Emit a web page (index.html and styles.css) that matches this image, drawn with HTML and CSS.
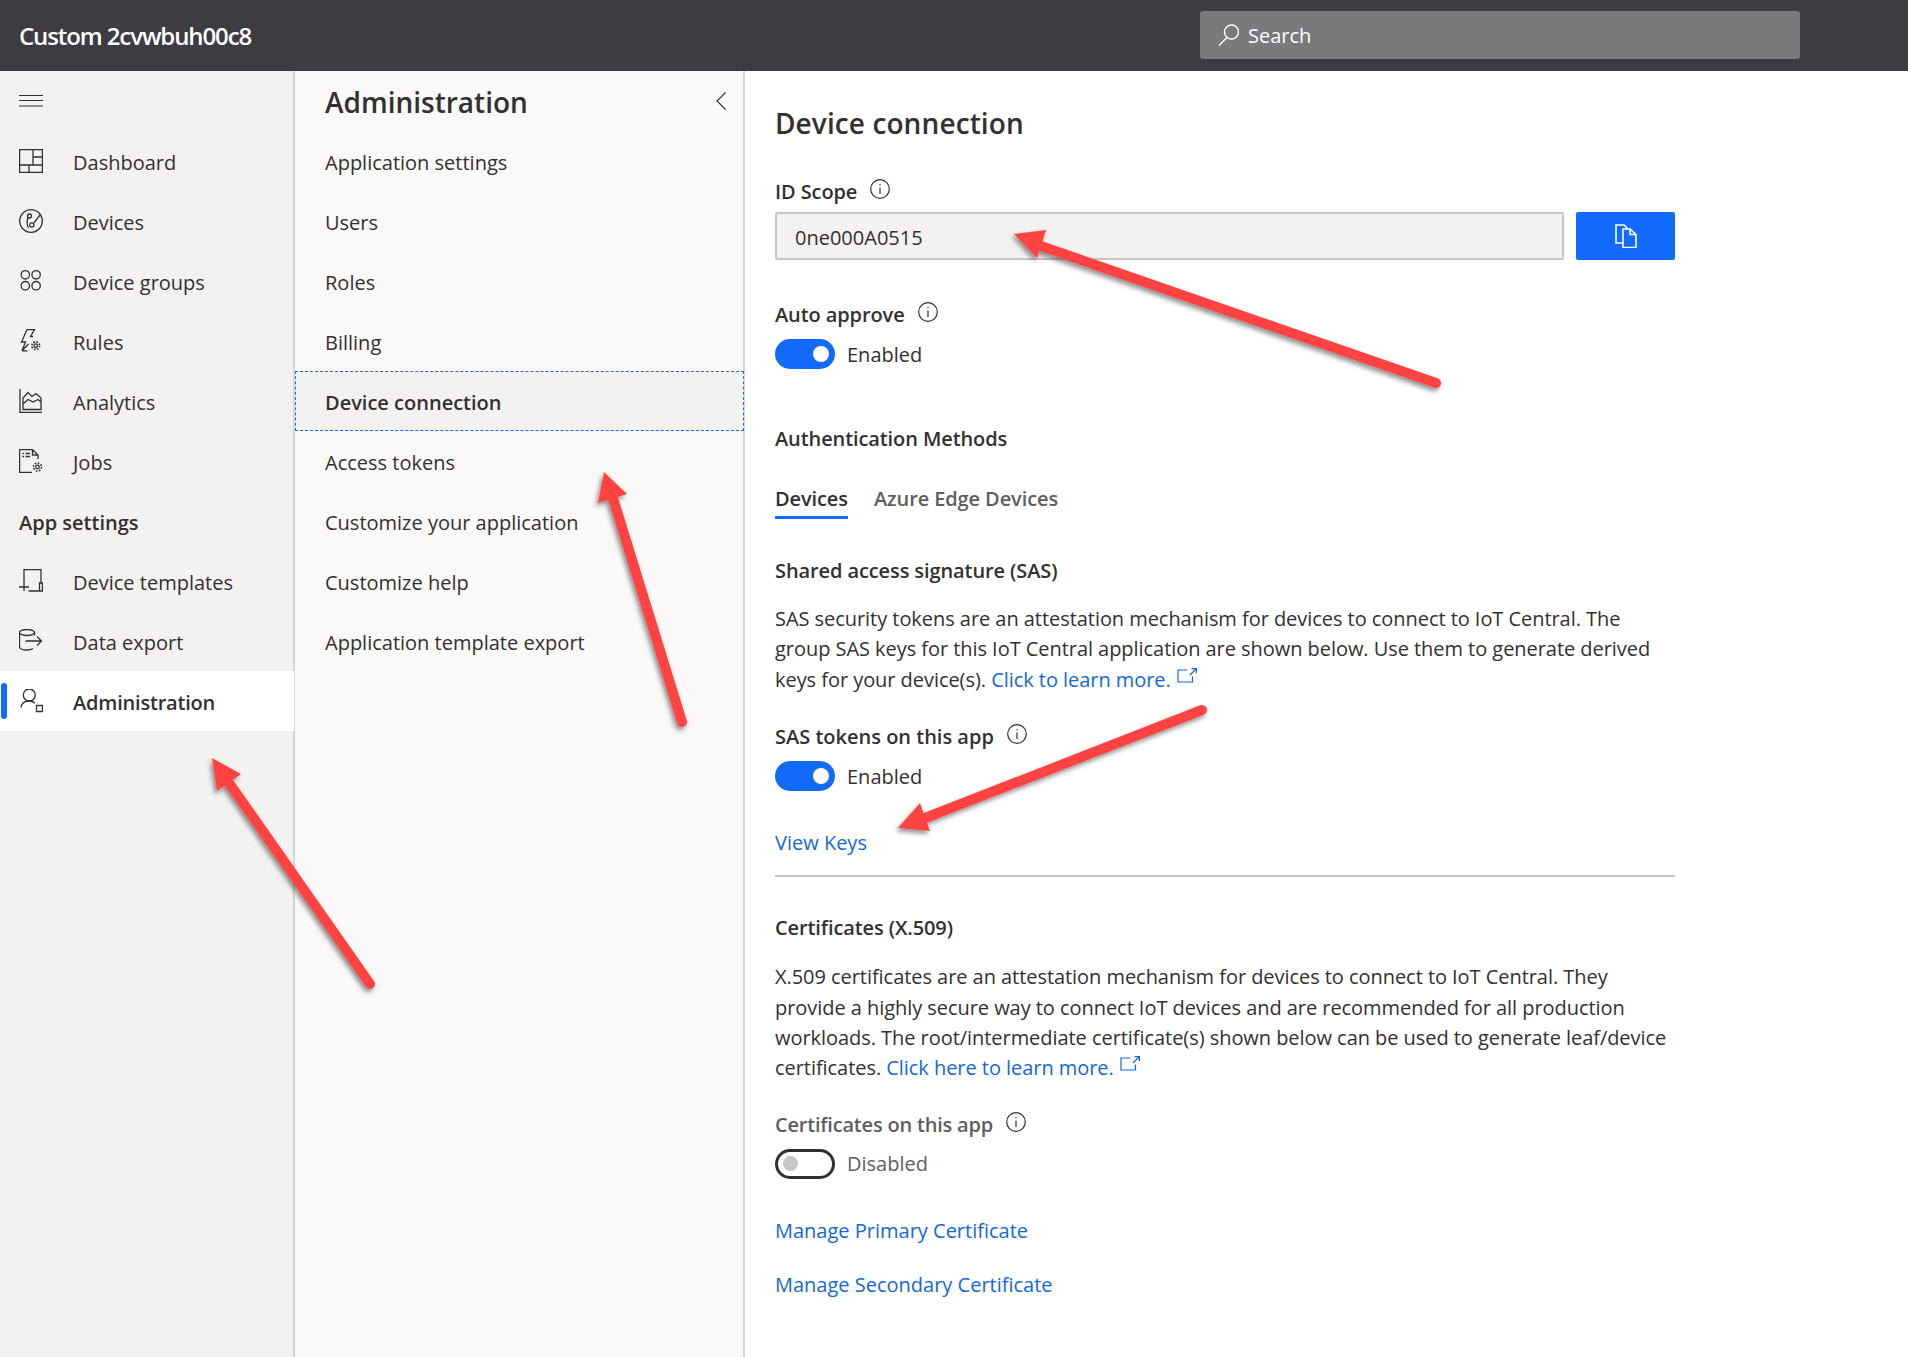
FILE: index.html
```html
<!DOCTYPE html>
<html lang="en">
<head>
<meta charset="utf-8">
<title>Device connection</title>
<link rel="stylesheet" href="styles.css">
</head>
<body>
<div class="page">
  <header class="topbar">
    <div class="brand">Custom 2cvwbuh00c8</div>
    <div class="search">
      <svg class="search-icon" viewBox="0 0 22 22"><circle cx="13.5" cy="8" r="7"/><path d="M9 13.5 1 21.5"/></svg>
      <span>Search</span>
    </div>
  </header>
  <div class="body">
    <nav class="sidebar">
      <div class="burger"><svg class="ico thin" viewBox="0 0 24 24"><path d="M0 .5H24M0 5.5H24M0 11H24" transform="translate(0 6)"/></svg></div>
      <a class="side-row"><svg class="ico" viewBox="0 0 24 24"><path d="M.6.6H23.4V23.4H.6ZM.6 16H23.4M14 .6V16M14 8H23.4M10 16V23.4"/></svg><span>Dashboard</span></a>
      <a class="side-row"><svg class="ico" viewBox="0 0 24 24"><circle cx="12" cy="12" r="11.3"/><circle cx="10.5" cy="7" r="2"/><circle cx="12.8" cy="16" r="2.1"/><path d="M14.4 14.6 21 6M9.2 8.6C7.5 12 8 16 9.5 19"/></svg><span>Devices</span></a>
      <a class="side-row"><svg class="ico" viewBox="0 0 24 24"><circle cx="6.300" cy="5.800" r="4.200"/><circle cx="17.100" cy="5.800" r="4.200"/><circle cx="6.300" cy="16.700" r="4.200"/><circle cx="17.100" cy="16.700" r="4.200"/></svg><span>Device groups</span></a>
      <a class="side-row"><svg class="ico" viewBox="0 0 24 24"><path d="M8 .6H15.500L11.500 7.500H14M3 21.800 6.500 13H2.500L8 .6M3 21.800 9.500 15M3 21.800H8.500"/><circle cx="16.700" cy="16.700" r="1.800"/><circle cx="16.700" cy="16.700" r="3.900" stroke-dasharray="1.600 1.500" stroke-width="1.600"/></svg><span>Rules</span></a>
      <a class="side-row"><svg class="ico" viewBox="0 0 24 24"><path d="M1 0V23.4H23M4 20.500H22V9L17 4.500 13 7.500 9 3.500 4 9ZM4 15 9 10.500 14 13 19 10.500 22 13"/></svg><span>Analytics</span></a>
      <a class="side-row"><svg class="ico" viewBox="0 0 24 24"><path d="M13 23.4H.6V.6H13.5L19 6V10M13.5.6V6H19M3.5 4.5H5M6.5 4.5H11M3.5 7.5H5M6.5 7.5H11"/><circle cx="18.5" cy="18" r="1.800"/><circle cx="18.5" cy="18" r="4" stroke-dasharray="1.600 1.500" stroke-width="1.600"/></svg><span>Jobs</span></a>
      <div class="side-heading">App settings</div>
      <a class="side-row"><svg class="ico" viewBox="0 0 24 24"><path d="M5 22V.6H22V13.500M0 18H10M9.500 22H23.400V14H20.500V22"/></svg><span>Device templates</span></a>
      <a class="side-row"><svg class="ico" viewBox="0 0 24 24"><ellipse cx="8" cy="3.500" rx="7.500" ry="3"/><path d="M.5 3.500V17.500C.5 19.800 4 21 8 21 10.500 21 12.500 20.500 14 19.500M15.500 3.500V6.500M6.500 12H22.500M18 7.500 22.500 12 18 16.500"/></svg><span>Data export</span></a>
      <a class="side-row active"><svg class="ico" viewBox="0 0 24 24"><circle cx="10.300" cy="6" r="6"/><path d="M1.800 18.500C2.500 15 5.500 12 10.300 12 12.500 12 14.500 12.800 15.800 14.200M17.500 16.500H23.500V22.500H17.500Z"/></svg><span>Administration</span></a>
    </nav>
    <aside class="subnav">
      <div class="subnav-head">
        <h2>Administration</h2>
        <svg class="chevron" viewBox="0 0 10 18"><path d="M9.500.5 1 9l8.500 8.500"/></svg>
      </div>
      <a class="sub-row">Application settings</a>
      <a class="sub-row">Users</a>
      <a class="sub-row">Roles</a>
      <a class="sub-row">Billing</a>
      <a class="sub-row selected">Device connection</a>
      <a class="sub-row">Access tokens</a>
      <a class="sub-row">Customize your application</a>
      <a class="sub-row">Customize help</a>
      <a class="sub-row">Application template export</a>
    </aside>
    <main class="main">
      <h1>Device connection</h1>
      <div class="label label-id">ID Scope<svg class="info" viewBox="0 0 20 20"><circle cx="10" cy="10" r="9.300"/><path d="M10 8.500V15M10 5V6.300"/></svg></div>
      <div class="id-row">
        <div class="id-input">0ne000A0515</div>
        <button class="copy" type="button"><svg viewBox="0 0 22 24"><path d="M8 19H1V1H9L12 4V5M8 5H15L21 10.500V23.500H8ZM15 5V10.500H21" /></svg></button>
      </div>
      <div class="label label-auto">Auto approve<svg class="info" viewBox="0 0 20 20"><circle cx="10" cy="10" r="9.300"/><path d="M10 8.500V15M10 5V6.300"/></svg></div>
      <div class="toggle-row"><span class="toggle on"></span><span>Enabled</span></div>
      <div class="label label-auth">Authentication Methods</div>
      <div class="tabs"><span class="tab current">Devices</span><span class="tab">Azure Edge Devices</span></div>
      <div class="label label-sas">Shared access signature (SAS)</div>
      <p class="para para-sas">SAS security tokens are an attestation mechanism for devices to connect to IoT Central. The<br>group SAS keys for this IoT Central application are shown below. Use them to generate derived<br>keys for your device(s). <a class="link">Click to learn more.</a><svg class="ext" viewBox="0 0 20 15"><path d="M10 2H1V14H15.500V8.500M13 7 19 1M14.500.6H19.400V5"/></svg></p>
      <div class="label label-tok strong">SAS tokens on this app<svg class="info" viewBox="0 0 20 20"><circle cx="10" cy="10" r="9.300"/><path d="M10 8.500V15M10 5V6.300"/></svg></div>
      <div class="toggle-row"><span class="toggle on"></span><span>Enabled</span></div>
      <a class="link block view-keys">View Keys</a>
      <div class="divider"></div>
      <div class="label label-cert">Certificates (X.509)</div>
      <p class="para para-cert">X.509 certificates are an attestation mechanism for devices to connect to IoT Central. They<br>provide a highly secure way to connect IoT devices and are recommended for all production<br>workloads. The root/intermediate certificate(s) shown below can be used to generate leaf/device<br>certificates. <a class="link">Click here to learn more.</a><svg class="ext" viewBox="0 0 20 15"><path d="M10 2H1V14H15.500V8.500M13 7 19 1M14.500.6H19.400V5"/></svg></p>
      <div class="label label-tok-off muted">Certificates on this app<svg class="info" viewBox="0 0 20 20"><circle cx="10" cy="10" r="9.300"/><path d="M10 8.500V15M10 5V6.300"/></svg></div>
      <div class="toggle-row muted"><span class="toggle off"></span><span>Disabled</span></div>
      <a class="link block manage-1">Manage Primary Certificate</a>
      <a class="link block manage-2">Manage Secondary Certificate</a>
    </main>
  </div>
  <svg class="arrows" viewBox="0 0 1908 1357" aria-hidden="true">
    <defs>
      <filter id="shadow" x="-10%" y="-10%" width="120%" height="120%">
        <feDropShadow dx="-2" dy="3" stdDeviation="2.500" flood-color="#000" flood-opacity=".45"/>
      </filter>
    </defs>
    <g filter="url(#shadow)">
      <path class="shaft" d="M1436 383 1035 244"/>
      <polygon class="head" points="1014,234 1046,230 1037,258"/>
    </g>
    <g filter="url(#shadow)">
      <path class="shaft" d="M682 722 612 495"/>
      <polygon class="head" points="604,472 627,494 598,503"/>
    </g>
    <g filter="url(#shadow)">
      <path class="shaft" d="M370 984 227 780"/>
      <polygon class="head" points="212,758 241,774 217,791"/>
    </g>
    <g filter="url(#shadow)">
      <path class="shaft" d="M1202 710 920 820"/>
      <polygon class="head" points="898,828 920,803 930,831"/>
    </g>
  </svg>
</div>
</body>
</html>
```

FILE: styles.css
```css
* { box-sizing: border-box; }
html, body { margin: 0; padding: 0; }
body {
  font-family: "Open Sans", "Noto Sans", sans-serif;
  font-size: 20px;
  color: #323130;
  background: #fff;
}
.page { position: relative; width: 1908px; height: 1357px; overflow: hidden; display: flex; flex-direction: column; }

.topbar { height: 71px; flex: none; background: #3d3c42; color: #fff; display: flex; align-items: center; padding: 0 19px; }
.brand { font-size: 24px; font-weight: 600; letter-spacing: -1.1px; flex: none; width: 1181px; }
.search { width: 600px; height: 48px; margin-top: -1px; background: #7a7a7c; border-radius: 3px; display: flex; align-items: center; padding-left: 18px; gap: 8px; }
.search-icon { width: 22px; height: 22px; fill: none; stroke: #fff; stroke-width: 1.4; }

.body { flex: 1; display: flex; min-height: 0; }

.sidebar { width: 295px; flex: none; background: #f3f2f1; border-right: 2px solid #d8d6d4; }
.ico { width: 24px; height: 24px; flex: none; fill: none; stroke: #323130; stroke-width: 1.3; }
.ico.thin { stroke-width: 1; }
.burger { height: 60px; padding-left: 19px; display: flex; align-items: center; }
.side-row { height: 60px; padding-left: 19px; display: flex; align-items: center; gap: 30px; position: relative; }
.side-row span { padding-top: 2px; }
.side-heading { height: 60px; padding: 2px 0 0 19px; display: flex; align-items: center; font-weight: 600; }
.side-row.active { background: #fff; font-weight: 600; letter-spacing: -0.2px; margin-right: -1px; }
.side-row.active::before { content: ""; position: absolute; left: 1px; top: 12px; width: 6px; height: 36px; border-radius: 3px; background: #136bfb; }

.subnav { width: 450px; flex: none; background: #faf9f8; border-right: 2px solid #d8d6d4; }
.subnav-head { height: 60px; padding: 2px 17px 0 30px; display: flex; align-items: center; justify-content: space-between; }
.subnav-head h2 { margin: 0; font-size: 28px; font-weight: 600; }
.chevron { width: 10px; height: 18px; margin-top: -2px; fill: none; stroke: #323130; stroke-width: 1.1; }
.sub-row { display: flex; align-items: center; height: 60px; padding: 2px 0 0 30px; }
.sub-row.selected { background: #f3f2f1; outline: 1px dashed #136bfb; outline-offset: -1px; font-weight: 600; margin-right: -1px; }

.main { flex: 1; padding: 33px 0 0 30px; }
.main h1 { margin: 0; font-size: 28px; line-height: 38px; font-weight: 600; letter-spacing: 0.1px; }
.label { display: flex; line-height: 30px; font-weight: 600; letter-spacing: -0.1px; }
.label.strong { letter-spacing: 0; }
.info { width: 20px; height: 20px; margin: 2px 0 0 13px; fill: none; stroke: #323130; stroke-width: 1.2; }
.label-id { margin-top: 35px; }
.label-auto { margin-top: 40px; }
.label-auth { margin-top: 55px; }
.label-sas { margin-top: 37px; }
.label-tok { margin-top: 27px; }
.label-tok-off { margin-top: 26px; letter-spacing: -0.2px; }
.label-cert { margin-top: 36px; }

.id-row { display: flex; gap: 12px; margin-top: 5px; width: 900px; }
.id-input { flex: 1; height: 48px; background: #f3f2f1; border: 2px solid #c8c6c4; border-radius: 2px; padding: 2px 0 0 18px; display: flex; align-items: center; }
.copy { width: 99px; height: 48px; padding: 0; border: 0; border-radius: 2px; background: #136bfb; display: flex; align-items: center; justify-content: center; }
.copy svg { width: 22px; height: 24px; fill: none; stroke: #fff; stroke-width: 1.6; }

.toggle-row { display: flex; align-items: center; gap: 12px; height: 30px; margin-top: 9px; }
.toggle { width: 60px; height: 30px; border-radius: 15px; flex: none; position: relative; }
.toggle::after { content: ""; position: absolute; border-radius: 50%; }
.toggle.on { background: #136bfb; }
.toggle.on::after { width: 16px; height: 16px; right: 6px; top: 7px; background: #fff; }
.toggle.off { background: #fff; border: 3px solid #323130; }
.toggle.off::after { width: 15px; height: 15px; left: 5px; top: 4px; background: #c8c6c4; }
.muted { color: #605e5c; }

.tabs { display: flex; gap: 26px; margin-top: 30px; }
.tab { line-height: 30px; padding-bottom: 2px; border-bottom: 3px solid transparent; font-weight: 600; letter-spacing: -0.1px; color: #605e5c; }
.tab.current { color: #323130; border-bottom-color: #136bfb; }

.para { margin: 0; line-height: 30.4px; width: 960px; letter-spacing: -0.05px; }
.para-sas { margin-top: 18px; }
.para-cert { margin-top: 19px; }
.link { color: #1567db; }
.block { display: block; line-height: 30px; }
.ext { width: 20px; height: 15px; margin-left: 6px; vertical-align: 4px; fill: none; stroke: #1567db; stroke-width: 1.2; }
.view-keys { margin-top: 37px; }
.divider { width: 900px; height: 2px; margin-top: 17px; background: #c8c6c4; }
.manage-1 { margin-top: 37px; }
.manage-2 { margin-top: 24px; }

.arrows { position: absolute; left: 0; top: 0; width: 1908px; height: 1357px; pointer-events: none; }
.shaft { fill: none; stroke: #ff4343; stroke-width: 10; stroke-linecap: round; }
.head { fill: #ff4343; }
```
